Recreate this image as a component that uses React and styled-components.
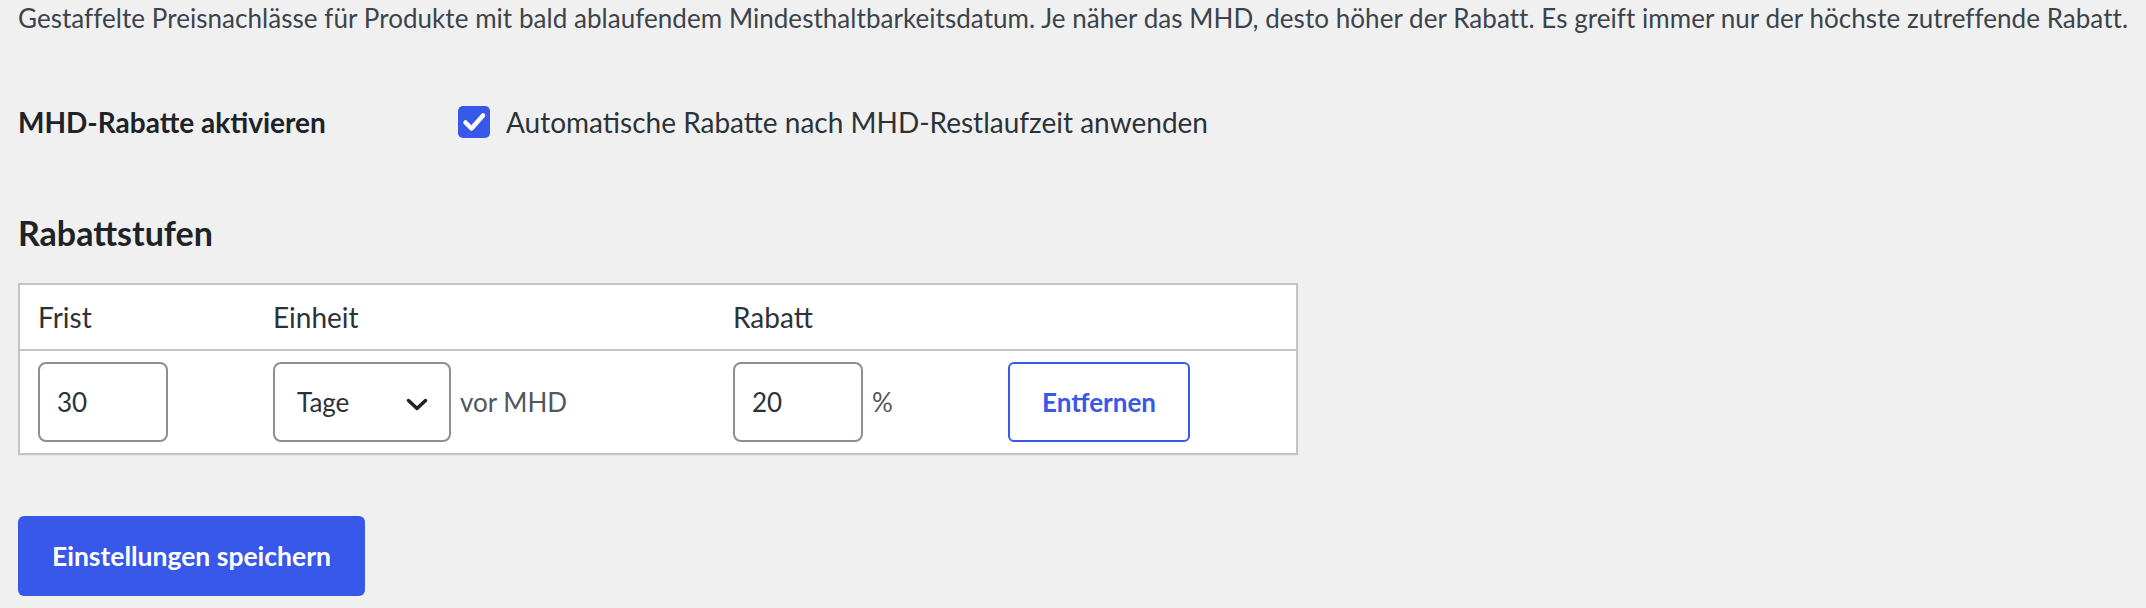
import styled, { createGlobalStyle } from "styled-components";

const GlobalStyle = createGlobalStyle`
  body {
    margin: 0;
    background: #f0f0f1;
    font-family: Lato, "Liberation Sans", sans-serif;
    color: #3c434a;
  }
`;

const Page = styled.div`
  padding: 0 18px;
`;

const Description = styled.p`
  margin: 0;
  font-size: 26px;
  line-height: 36px;
  letter-spacing: 0.05px;
  white-space: nowrap;
  color: #3c434a;
`;

const FormRow = styled.div`
  display: grid;
  grid-template-columns: 440px 1fr;
  align-items: center;
  margin-top: 66px;
  height: 40px;
`;

const RowLabel = styled.div`
  font-size: 28px;
  line-height: 40px;
  font-weight: 700;
  color: #1d2327;
`;

const CheckLabel = styled.label`
  display: flex;
  align-items: center;
  gap: 16px;
  font-size: 28px;
  line-height: 40px;
  color: #2c3338;
`;

const CheckBox = styled.span`
  display: inline-flex;
  width: 32px;
  height: 32px;
  border-radius: 5px;
  background: #3858e9;
`;

const SectionTitle = styled.h2`
  margin: 71px 0 0;
  font-size: 34px;
  line-height: 40px;
  font-weight: 700;
  color: #1d2327;
`;

const Table = styled.table`
  margin-top: 30px;
  width: 1280px;
  table-layout: fixed;
  border-collapse: separate;
  border-spacing: 0;
  background: #fff;
  border: 2px solid #c3c4c7;
  box-shadow: 0 1px 1px rgba(0, 0, 0, 0.04);
`;

const Th = styled.th`
  width: ${(p) => p.$w}px;
  box-sizing: border-box;
  padding: 12px 18px;
  text-align: left;
  font-size: 28px;
  line-height: 40px;
  font-weight: 400;
  color: #2c3338;
  border-bottom: 2px solid #c3c4c7;
`;

const Td = styled.td`
  padding: 11px 18px;
  vertical-align: middle;
`;

const Cell = styled.div`
  display: flex;
  align-items: center;
  gap: 9px;
`;

const NumberInput = styled.input`
  box-sizing: border-box;
  width: 130px;
  height: 80px;
  padding: 0 17px;
  border: 2px solid #8c8f94;
  border-radius: 8px;
  background: #fff;
  font-family: inherit;
  font-size: 26px;
  color: #2c3338;
  outline: none;
`;

const SelectWrap = styled.div`
  position: relative;
  width: 178px;
  height: 80px;
`;

const Select = styled.select`
  appearance: none;
  box-sizing: border-box;
  width: 100%;
  height: 100%;
  padding: 0 48px 0 22px;
  border: 2px solid #8c8f94;
  border-radius: 8px;
  background: #fff;
  font-family: inherit;
  font-size: 26px;
  color: #2c3338;
  outline: none;
`;

const Chevron = styled.svg`
  position: absolute;
  right: 23px;
  top: 36px;
  pointer-events: none;
`;

const Unit = styled.span`
  font-size: 26px;
  color: #50575e;
`;

const RemoveButton = styled.button`
  box-sizing: border-box;
  width: 182px;
  height: 80px;
  border: 2px solid #3858e9;
  border-radius: 6px;
  background: #fff;
  color: #3858e9;
  font-family: inherit;
  font-size: 26px;
  font-weight: 700;
`;

const SaveButton = styled.button`
  display: block;
  box-sizing: border-box;
  margin-top: 61px;
  width: 347px;
  height: 80px;
  border: none;
  border-radius: 6px;
  background: #3858e9;
  color: #fff;
  font-family: inherit;
  font-size: 26.5px;
  font-weight: 700;
`;

const columns = [
  { label: "Frist", width: 235 },
  { label: "Einheit", width: 460 },
  { label: "Rabatt", width: 275 },
  { label: "", width: 306 },
];

export default function App() {
  return (
    <>
      <GlobalStyle />
      <Page>
        <Description>
          Gestaffelte Preisnachlässe für Produkte mit bald ablaufendem Mindesthaltbarkeitsdatum. Je näher das MHD, desto höher der Rabatt. Es greift immer nur der höchste zutreffende Rabatt.
        </Description>

        <FormRow>
          <RowLabel>MHD-Rabatte aktivieren</RowLabel>
          <CheckLabel>
            <CheckBox>
              <svg width="32" height="32" viewBox="0 0 32 32">
                <polyline points="7.5,16.5 13.5,22.5 25,9.5" fill="none" stroke="#fff" strokeWidth="4.5" strokeLinecap="round" strokeLinejoin="round" />
              </svg>
            </CheckBox>
            Automatische Rabatte nach MHD-Restlaufzeit anwenden
          </CheckLabel>
        </FormRow>

        <SectionTitle>Rabattstufen</SectionTitle>

        <Table>
          <thead>
            <tr>
              {columns.map((c, i) => (
                <Th key={i} $w={c.width}>{c.label}</Th>
              ))}
            </tr>
          </thead>
          <tbody>
            <tr>
              <Td>
                <NumberInput type="text" defaultValue="30" />
              </Td>
              <Td>
                <Cell>
                  <SelectWrap>
                    <Select defaultValue="tage">
                      <option value="tage">Tage</option>
                      <option value="wochen">Wochen</option>
                    </Select>
                    <Chevron width="22" height="13" viewBox="0 0 22 13">
                      <path d="M2.5 2.5 L11 10.5 L19.5 2.5" fill="none" stroke="#1d2327" strokeWidth="3.5" strokeLinecap="round" strokeLinejoin="round" />
                    </Chevron>
                  </SelectWrap>
                  <Unit>vor MHD</Unit>
                </Cell>
              </Td>
              <Td>
                <Cell>
                  <NumberInput type="text" defaultValue="20" />
                  <Unit>%</Unit>
                </Cell>
              </Td>
              <Td>
                <RemoveButton>Entfernen</RemoveButton>
              </Td>
            </tr>
          </tbody>
        </Table>

        <SaveButton>Einstellungen speichern</SaveButton>
      </Page>
    </>
  );
}
